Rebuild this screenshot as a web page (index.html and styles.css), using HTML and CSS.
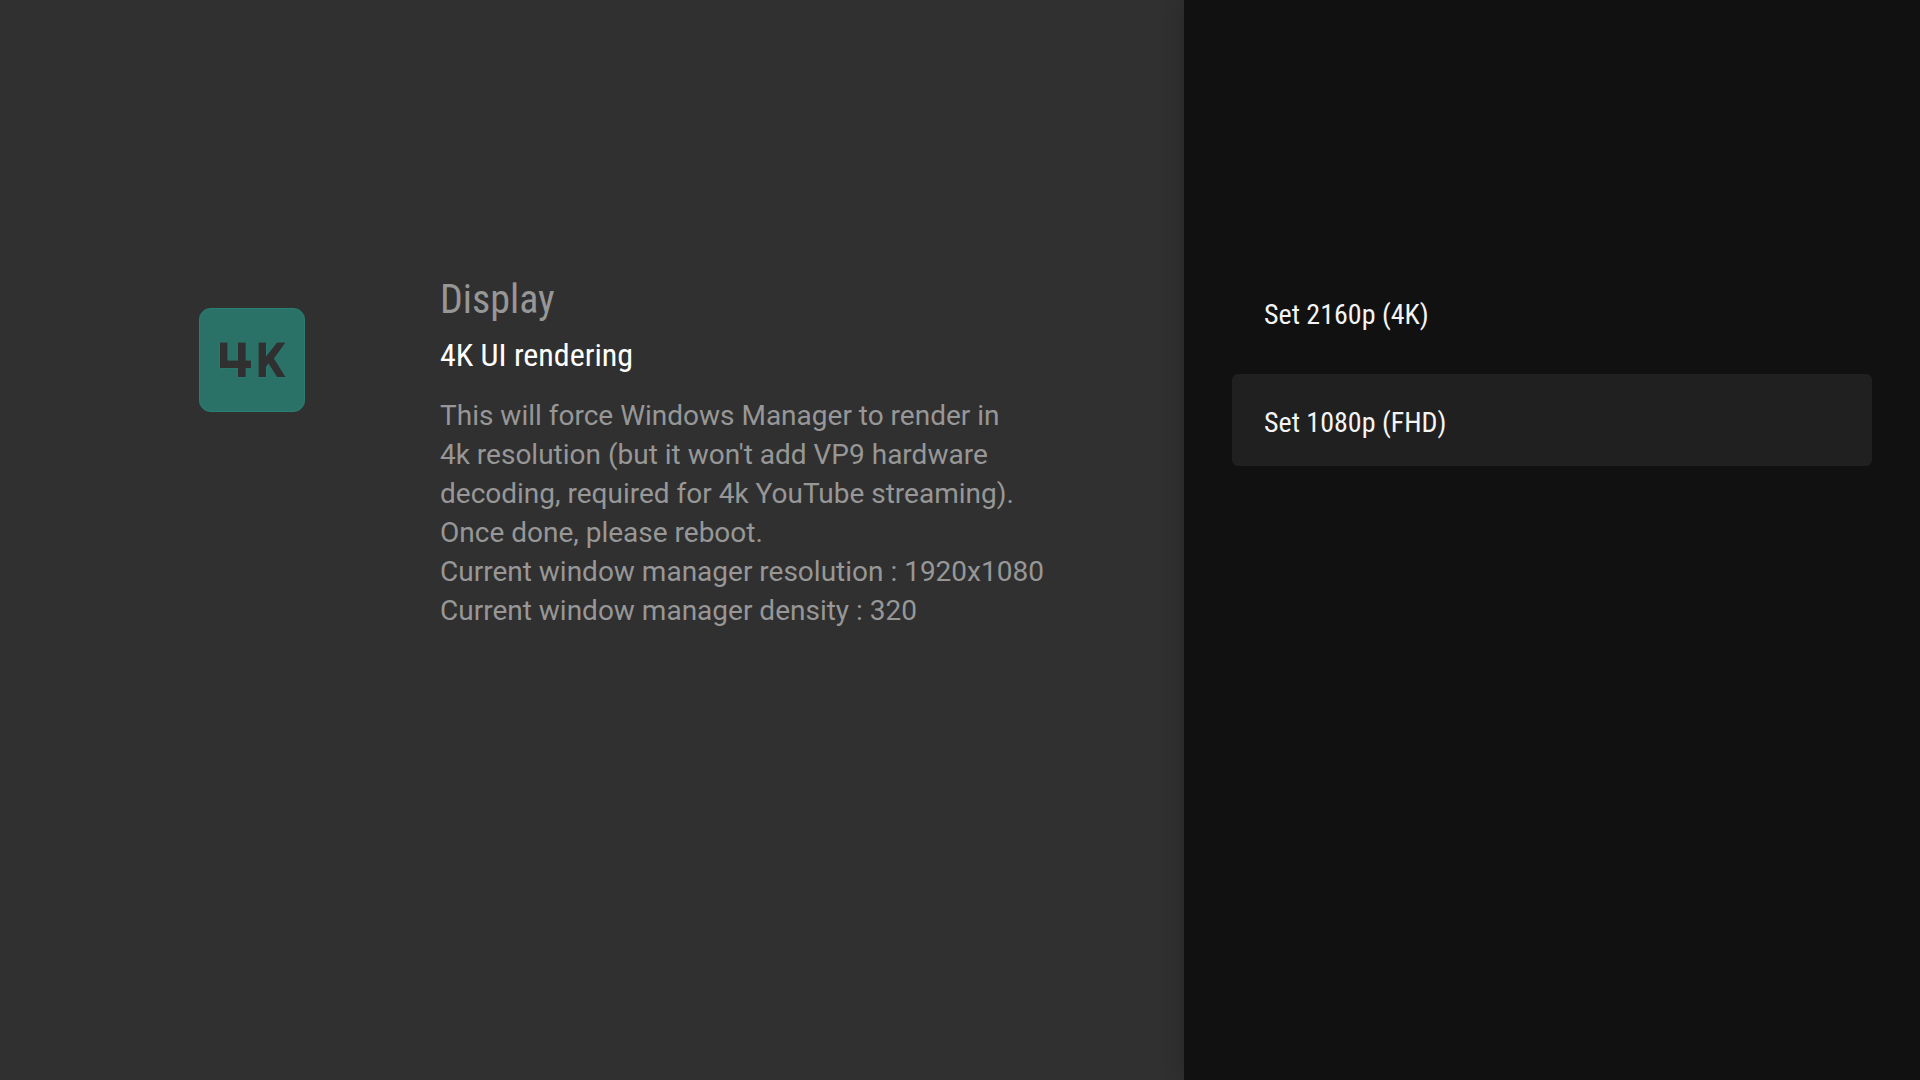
FILE: index.html
```
<!DOCTYPE html>
<html lang="en">
<head>
<meta charset="utf-8">
<title>Display</title>
<link rel="stylesheet" href="styles.css">
</head>
<body>
<main class="guidance">
  <svg class="icon" viewBox="0 0 108 106" aria-hidden="true">
    <rect class="tile" x="1.5" y="1.5" width="105" height="103" rx="11"/>
    <path class="mark" d="M22 35.500h7.500v18H40v-18h7.700v18H53V61h-5.300v9H40v-9H22zM60.500 35.500H68v14l11-14h8.500L76 51.500 87.500 70H79L70.500 56.500 68 59.500V70h-7.500z"/>
  </svg>
  <div class="text">
    <p class="breadcrumb">Display</p>
    <h1 class="title">4K UI rendering</h1>
    <p class="description">This will force Windows Manager to render in<br>4k resolution (but it won't add VP9 hardware decoding, required for 4k YouTube streaming). Once done, please reboot.<br>Current window manager resolution : 1920x1080<br>Current window manager density : 320</p>
  </div>
</main>
<aside class="actions">
  <button class="action" type="button">Set 2160p (4K)</button>
  <button class="action selected" type="button">Set 1080p (FHD)</button>
</aside>
</body>
</html>
```
FILE: styles.css
```
* { box-sizing: border-box; }
body {
  display: grid;
  grid-template-columns: minmax(0, 1184fr) minmax(0, 736fr);
  min-height: 100vh;
  margin: 0;
  background: #303030;
  font-family: Roboto, sans-serif;
}
.guidance {
  display: flex;
  align-items: flex-start;
  padding: 276px 136px 0 198px;
}
.icon {
  flex: none;
  width: 108px;
  margin-top: 31px;
}
.tile { fill: #2a7168; stroke: #2b7f73; stroke-width: 1; }
.mark { fill: #303030; stroke: #2b7f73; stroke-width: 1; paint-order: stroke; }
.text { flex: 1; min-width: 0; margin-left: 134px; }
.breadcrumb, .title, .description { margin: 0; font-weight: 400; }
.breadcrumb, .title, .action { font-family: "Roboto Condensed", Roboto, sans-serif; }
.breadcrumb {
  color: #979797;
  font-size: 40px;
  line-height: 48px;
}
.title {
  margin-top: 12px;
  color: #fff;
  font-size: 32px;
  line-height: 38px;
}
.description {
  max-width: 608px;
  margin-top: 22px;
  color: #979797;
  font-size: 28px;
  line-height: 39px;
}
.actions {
  display: flex;
  flex-direction: column;
  gap: 16px;
  padding: 266px 48px 0;
  background: #111;
  box-shadow: 0 0 20px #0003;
}
.action {
  height: 92px;
  padding: 4px 32px 0;
  border: 0;
  border-radius: 6px;
  background: none;
  color: #f4f4f4;
  font-size: 28px;
  text-align: left;
}
.selected { background: #202020; }
```
